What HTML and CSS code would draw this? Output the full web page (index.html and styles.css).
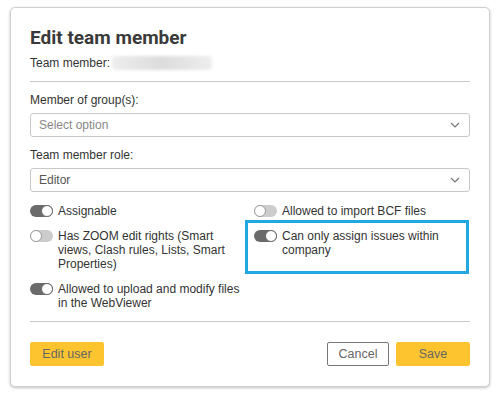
FILE: index.html
```html
<!DOCTYPE html>
<html lang="en">
<head>
    <meta charset="UTF-8">
    <meta name="viewport" content="width=device-width, initial-scale=1.0">
    <title>Edit team member</title>
    <link rel="stylesheet" href="styles.css">
</head>
<body>
    <div class="dialog">
        <h1 class="dialog-title">Edit team member</h1>
        <div class="member-line">
            <span>Team member:</span>
            <span class="blurred-name"></span>
        </div>

        <hr class="divider">

        <label class="field-label">Member of group(s):</label>
        <div class="select">
            <span class="placeholder">Select option</span>
            <svg class="chevron" width="10" height="6" viewBox="0 0 10 6"><polyline points="1,1 5,5 9,1" fill="none" stroke="#777" stroke-width="1.2"/></svg>
        </div>

        <label class="field-label">Team member role:</label>
        <div class="select">
            <span>Editor</span>
            <svg class="chevron" width="10" height="6" viewBox="0 0 10 6"><polyline points="1,1 5,5 9,1" fill="none" stroke="#777" stroke-width="1.2"/></svg>
        </div>

        <!-- permission toggles -->
        <div class="toggles">
            <div class="toggle-item">
                <span class="switch on"></span>
                <span class="toggle-text">Assignable</span>
            </div>
            <div class="toggle-item">
                <span class="switch"></span>
                <span class="toggle-text">Allowed to import BCF files</span>
            </div>
            <div class="toggle-item">
                <span class="switch"></span>
                <span class="toggle-text">Has ZOOM edit rights (Smart views, Clash rules, Lists, Smart Properties)</span>
            </div>
            <div class="toggle-item highlighted">
                <span class="switch on"></span>
                <span class="toggle-text">Can only assign issues within company</span>
            </div>
            <div class="toggle-item">
                <span class="switch on"></span>
                <span class="toggle-text">Allowed to upload and modify files in the WebViewer</span>
            </div>
        </div>

        <hr class="divider bottom">

        <div class="actions">
            <button class="btn btn-yellow">Edit user</button>
            <div class="actions-right">
                <button class="btn btn-outline">Cancel</button>
                <button class="btn btn-yellow">Save</button>
            </div>
        </div>
    </div>
</body>
</html>
```

FILE: styles.css
```css
/* Page reset */
body, html {
    margin: 0;
    padding: 0;
    background: #ffffff;
    font-family: "Liberation Sans", Arial, sans-serif;
    font-size: 12px;
    color: #333333;
}

/* Dialog card */
.dialog {
    margin: 7px 10px;
    padding: 18px 19px 20px;
    border: 1px solid #d0d0d0;
    border-radius: 5px;
    box-shadow: 0 1px 3px rgba(0, 0, 0, 0.25);
    background: #ffffff;
}

.dialog-title {
    margin: 0;
    font-family: Roboto, sans-serif;
    font-weight: 700;
    font-size: 19px;
    line-height: 24px;
    color: #3a3a3a;
}

.member-line {
    display: flex;
    align-items: center;
    gap: 2px;
    margin-top: 5px;
    line-height: 16px;
}

/* hidden member name */
.blurred-name {
    display: inline-block;
    width: 100px;
    height: 14px;
    border-radius: 4px;
    background: linear-gradient(90deg, #eeeeee, #dcdcdc 50%, #eeeeee);
    filter: blur(1.5px);
}

.divider {
    border: none;
    border-top: 1px solid #c8c8c8;
    margin: 10px 0 0;
}

.divider.bottom {
    margin-top: 11px;
}

.field-label {
    display: block;
    margin-top: 10px;
    line-height: 16px;
}

.select {
    display: flex;
    align-items: center;
    justify-content: space-between;
    height: 22px;
    margin-top: 5px;
    padding: 0 8px 0 8px;
    border: 1px solid #c8c8c8;
    border-radius: 3px;
    color: #555555;
}

.select .placeholder {
    color: #888888;
}

.chevron {
    margin-right: 1px;
}

/* Toggles grid */
.toggles {
    display: grid;
    grid-template-columns: 1fr 216px;
    column-gap: 9px;
    row-gap: 11px;
    margin-top: 12px;
}

.toggle-item {
    position: relative;
    display: flex;
    align-items: flex-start;
    gap: 5px;
    line-height: 14px;
}

.toggle-text {
    flex: 1;
}

.switch {
    position: relative;
    flex: none;
    width: 23px;
    height: 12px;
    margin-top: 1px;
    border-radius: 6px;
    background: #cccccc;
}

.switch::after {
    content: "";
    position: absolute;
    top: 0;
    left: 0;
    width: 10px;
    height: 10px;
    border: 1px solid #9a9a9a;
    border-radius: 50%;
    background: #ffffff;
}

.switch.on {
    background: #6b6b6b;
}

.switch.on::after {
    left: 11px;
    border-color: #6b6b6b;
}

/* blue highlight frame drawn over the item */
.toggle-item.highlighted::before {
    content: "";
    position: absolute;
    top: -9px;
    left: -9px;
    right: 1px;
    bottom: -3px;
    border: 3px solid #22a7e0;
}

/* Footer buttons */
.actions {
    display: flex;
    justify-content: space-between;
    align-items: center;
    margin-top: 20px;
}

.actions-right {
    display: flex;
    gap: 7px;
}

.btn {
    height: 24px;
    padding: 0;
    border: 1px solid transparent;
    border-radius: 2px;
    font-family: "Liberation Sans", Arial, sans-serif;
    font-size: 12.5px;
    color: #666666;
    background: none;
}

.btn-yellow {
    width: 74px;
    background: #fdc430;
    border-color: #fdc430;
}

.btn-outline {
    width: 62px;
    border-color: #777777;
    background: #ffffff;
}
```
